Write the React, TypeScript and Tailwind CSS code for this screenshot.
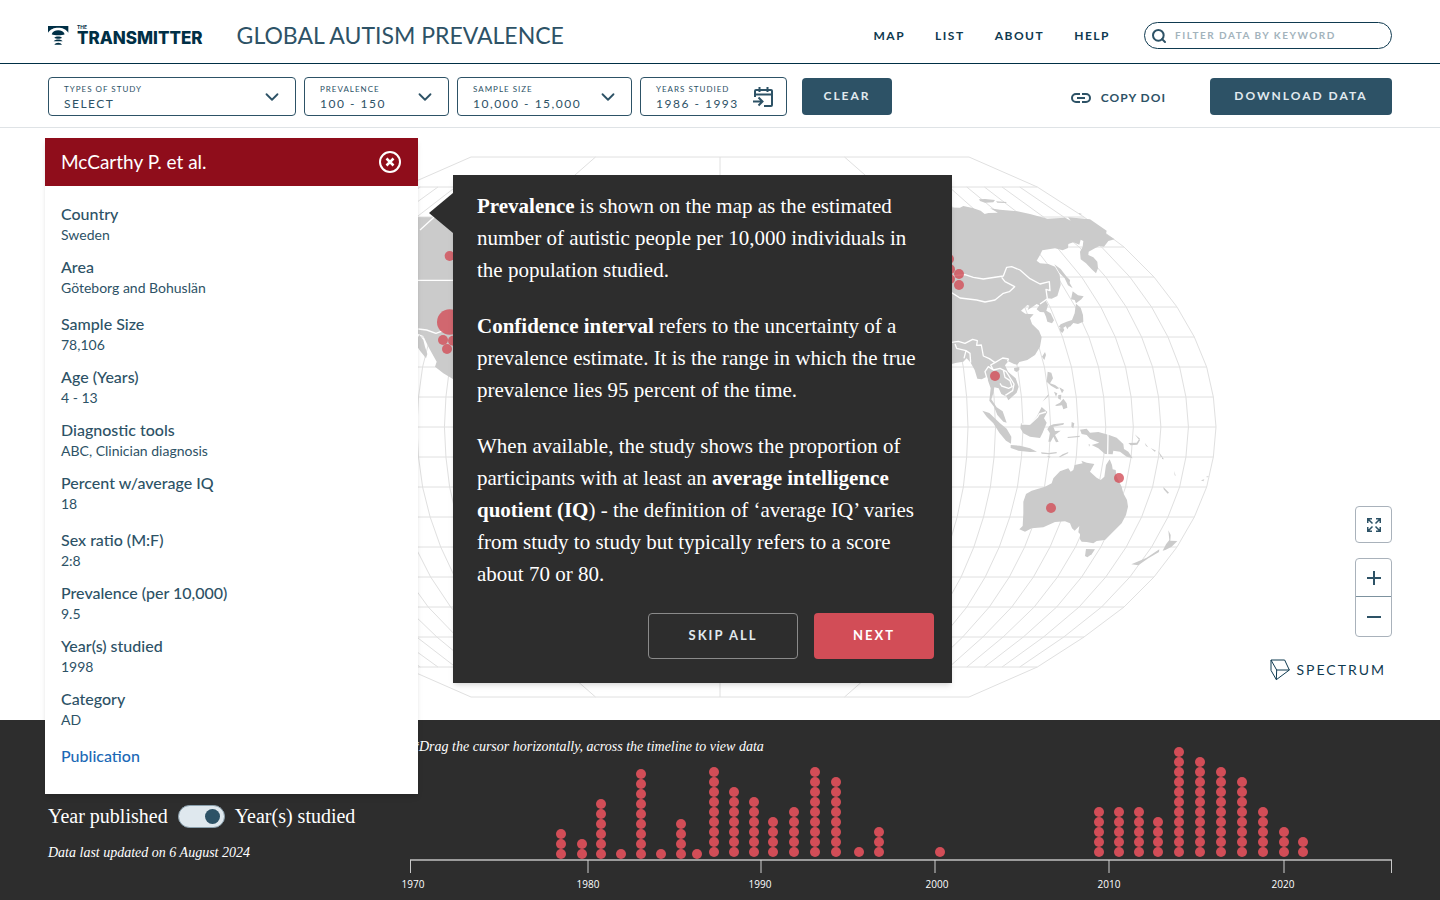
import { ChevronDown, Search } from "lucide-react";

const NAV = ["Map", "List", "About", "Help"];

const STUDY_GROUPS = [
  [
    { label: "Country", value: "Sweden" },
    { label: "Area", value: "Göteborg and Bohuslän" },
  ],
  [
    { label: "Sample Size", value: "78,106" },
    { label: "Age (Years)", value: "4 - 13" },
    { label: "Diagnostic tools", value: "ABC, Clinician diagnosis" },
    { label: "Percent w/average IQ", value: "18" },
  ],
  [
    { label: "Sex ratio (M:F)", value: "2:8" },
    { label: "Prevalence (per 10,000)", value: "9.5" },
    { label: "Year(s) studied", value: "1998" },
    { label: "Category", value: "AD" },
  ],
];

// x position, number of studies, y of the lowest dot
const COLUMNS = [
  [151, 3, 114], [172, 2, 114], [191, 6, 114], [211, 1, 114], [231, 9, 114], [251, 1, 114],
  [271, 4, 114], [287, 1, 114], [304, 9, 112], [324, 7, 112], [344, 6, 112], [363, 4, 112],
  [384, 5, 112], [405, 9, 112], [426, 8, 112], [449, 1, 112], [469, 3, 112], [530, 1, 112],
  [689, 5, 112], [709, 5, 112], [729, 5, 112], [748, 4, 112], [769, 11, 112], [790, 10, 112],
  [811, 9, 112], [832, 8, 112], [853, 5, 112], [874, 3, 112], [893, 2, 112],
];

const TICKS = [
  { x: 1, label: "1970", textX: 3 },
  { x: 178, label: "1980", textX: 178 },
  { x: 351, label: "1990", textX: 350 },
  { x: 525, label: "2000", textX: 527 },
  { x: 699, label: "2010", textX: 699 },
  { x: 874, label: "2020", textX: 873 },
];

// Half width of the globe outline for every 10 degrees of latitude
const HALF_WIDTHS = [1488, 1480, 1460, 1423, 1371, 1302, 1212, 1092, 952, 747];
const CX = -660;
const CY = 861;

function meridian(share: number, maxLat: number) {
  const points: string[] = [];
  for (let lat = -maxLat; lat <= maxLat; lat++) {
    points.push(`${CX + share * HALF_WIDTHS[Math.abs(lat)]},${CY + lat * 90}`);
  }
  return points.join(" ");
}

const MERIDIANS = Array.from({ length: 37 }, (_, i) => meridian((i - 18) / 18, (i - 18) % 9 === 0 ? 9 : 8));
const LATITUDES = Array.from({ length: 19 }, (_, i) => i - 9);

const LAND = [
  // Asia
  "M-40 200L60 203L70 198L98 204L122 212L134 222L145 219L175 218L150 205L180 209L232 214L270 222L322 236L375 233L392 242L384 232L450 238L500 272L498 281L524 298L505 303L492 320L478 318L462 326L446 335L445 345L460 352L472 365L474 385L468 400L455 388L438 370L422 358L420 335L428 320L430 303L422 299L418 314L400 307L385 312L384 324L368 331L345 325L307 331L300 345L290 362L300 370L325 372L345 380L359 404L362 435L352 468L335 476L322 475L318 484L324 495L319 512L332 520L342 541L336 550L322 545L318 530L312 517L300 516L290 508L298 496L290 492L276 502L263 510L268 497L262 495L243 512L256 521L281 523L270 535L276 552L297 572L305 592L300 620L285 645L262 660L238 666L232 674L222 672L205 664L195 676L204 695L227 715L236 740L230 758L205 781L200 770L184 762L176 745L163 742L160 760L154 778L170 802L188 814L200 848L190 845L172 825L162 800L148 782L152 745L140 710L125 718L112 716L104 690L92 668L80 655L70 665L50 668L-40 690Z",
  "M117 178L135 177L165 180L160 187L135 188L120 183ZM168 184L200 186L198 189L172 188ZM416 219L426 222L420 224Z",
  "M343 373L362 387L380 410L390 420L389 429L398 445L384 436L374 415L358 398Z",
  "M398 454L414 466L431 469L424 478L408 490L404 480L393 478Z",
  "M408 491L422 503L429 525L430 545L414 552L400 549L390 560L378 558L366 566L356 560L362 553L380 545L396 540L404 520L406 505Z",
  "M358 565L370 564L373 570L367 579L361 574ZM377 557L388 558L382 568Z",
  "M315 636L318 645L313 660L306 650ZM222 684L238 681L238 690L230 696L223 692Z",
  "M323 695L334 698L339 715L330 730L345 735L358 745L350 747L333 737L320 725ZM342 755L352 760L348 770ZM358 742L372 750L366 760ZM355 765L364 764L362 780L354 775ZM345 796L360 788L370 776L380 790L382 803L370 808L366 796L350 798ZM325 763L326 768L307 785Z",
  // Sumatra, Java and Borneo
  "M127 812L148 819L180 850L200 866L214 890L213 911L198 902L178 878L160 850L140 830Z",
  "M212 915L240 917L270 925L291 935L270 936L235 932L212 924Z",
  "M243 850L268 854L290 830L305 801L322 816L312 835L320 848L308 878L300 894L270 890L250 880L241 865Z",
  "M328 858L340 853L372 849L370 854L340 860L345 873L362 872L345 885L356 905L348 907L340 890L332 905L325 905L330 880L322 868ZM395 846L403 850L400 865L394 860Z",
  "M303 937L325 939L350 936L350 940L328 943L305 941ZM357 950L368 943L385 936L384 940L360 952ZM320 947L332 950L328 953ZM382 891L420 887L418 891L384 894ZM446 912L450 914L447 920Z",
  // New Guinea and the islands east of it
  "M420 869L440 866L450 878L475 876L505 884L530 893L550 912L552 927L565 935L578 955L560 950L540 935L520 932L518 943L495 942L475 925L455 915L478 908L450 896L440 885L425 882Z",
  "M565 909L590 908L598 896L600 901L592 914L572 916ZM584 883L600 896L597 899ZM614 908L625 922L618 918ZM632 924L648 932L644 935ZM654 932L668 952L662 950ZM666 950L672 958L666 957Z",
  "M670 1041L687 1058L683 1061L671 1048ZM703 993L707 1008L704 1006ZM783 1021L793 1018L790 1024ZM797 1011L806 1008L804 1012Z",
  // Australia
  "M509 958L516 975L518 988L527 990L530 1010L545 1040L550 1060L561 1080L564 1100L558 1125L545 1150L515 1180L495 1200L470 1203L460 1210L440 1206L425 1205L420 1198L420 1182L415 1177L418 1158L404 1172L396 1165L390 1150L375 1144L345 1146L310 1162L275 1165L255 1175L238 1168L248 1158L250 1120L250 1085L258 1062L275 1052L315 1040L335 1030L340 1015L360 994L385 985L392 995L400 990L404 975L428 970L424 962L440 968L463 972L450 995L470 1013L482 1020L493 1010L498 975Z",
  "M438 1227L465 1228L455 1243L442 1252L435 1248Z",
  "M685 1171L692 1185L691 1202L712 1203L695 1220L676 1230L668 1232L678 1213L688 1200ZM658 1228L657 1236L625 1255L595 1276L574 1273L590 1266L620 1253Z",
  // North America
  "M-1700 230L-1520 232L-1440 232L-1440 730L-1490 700L-1515 680L-1510 665L-1535 620L-1550 588L-1570 580L-1700 560Z",
  "M-1562 585L-1550 600L-1545 620L-1538 642L-1542 655L-1560 632L-1575 610Z",
];

const BORDERS = [
  "M30 408L75 404L100 412L130 417L190 408L200 382L215 380L240 390L270 416L300 432L328 425L330 452L318 448L322 476M30 455L60 474L110 480L135 486L165 480L190 460L208 455L224 440L195 425L185 412M323 476L300 492",
  "M30 608L55 604L75 610L98 598L112 602L110 616L124 615L130 648L148 656L165 668L188 654L206 657M165 668L152 675L160 690L145 680L135 695L142 720M160 690L180 685L190 690L195 712L210 722L216 740L206 745L185 738L180 730M180 685L198 694L222 732L218 752L196 766M45 612L50 625L78 632L72 655M78 632L90 640L92 668M206 657L202 664",
  "M245 852L270 852L292 832L298 822L318 816M504 882L503 944",
  "M-1600 421H-1400M-1560 270L-1500 215M-1565 567L-1540 570L-1512 580L-1490 572",
];

// Study sites on the map: x, y, radius
const SITES = [
  [-1471, 348, 15], [-1471, 546, 38], [-1491, 600, 15], [-1461, 602, 15], [-1479, 627, 15],
  [27, 357, 15], [30, 388, 15], [30, 417, 15], [57, 402, 15], [57, 435, 15],
  [165, 708, 15], [537, 1014, 15], [333, 1104, 15],
];

function Logo() {
  return (
    <a href="#" aria-label="The Transmitter" className="flex items-center gap-2 text-[#002f45]">
      <svg width="21" height="19" viewBox="0 0 63 57" fill="currentColor" aria-hidden="true">
        <path d="M0 0H61V20C54 9 43 5 30.500 5S7 9 0 20Z" />
        <path d="M11 25C15 9 46 9 50 25C43 29 18 29 11 25Z" />
        <path d="M19 35C23 30 38 30 42 35C37 39 24 39 19 35Z" />
        <path d="M17 46C22 39 39 39 44 46Z" />
        <path d="M19 56C23 48 38 48 42 56Z" />
      </svg>
      <span className="flex flex-col font-['Inter',sans-serif]">
        <span className="text-[5px] leading-[5px] font-bold">THE</span>
        <span className="text-[17px] leading-[17px] font-extrabold">TRANSMITTER</span>
      </span>
    </a>
  );
}

function Header() {
  return (
    <header className="flex h-16 items-center border-b border-[#002f45] px-12 pt-2">
      <Logo />
      <h1 className="ml-[34px] flex-1 text-[23px] text-[#2d5266]">GLOBAL AUTISM PREVALENCE</h1>
      <nav className="mr-[34px] flex gap-[30px] text-xs font-bold tracking-[1.5px] text-[#0f3a50] uppercase">
        {NAV.map((item) => (
          <a key={item} href={`#${item.toLowerCase()}`}>
            {item}
          </a>
        ))}
      </nav>
      <label className="flex h-[27px] w-[248px] items-center gap-2 rounded-full border border-[#0f3a50] px-1.5">
        <Search className="size-4 shrink-0 text-[#2d5266]" strokeWidth={3} />
        <input
          type="search"
          aria-label="Filter data by keyword"
          placeholder="FILTER DATA BY KEYWORD"
          className="w-full min-w-0 bg-transparent text-[10px] font-bold tracking-[1.5px] outline-none placeholder:text-[#a3b3bc]"
        />
      </label>
    </header>
  );
}

function FilterSelect({ id, label, value, width }: { id: string; label: string; value: string; width: string }) {
  return (
    <div className={`relative h-[39px] rounded border border-[#2d5266] px-[15px] pt-[5px] text-[#2d5266] ${width}`}>
      <label htmlFor={id} className="mb-px block text-[8px] leading-3 tracking-[1px] uppercase">
        {label}
      </label>
      <select id={id} className="block w-full appearance-none bg-transparent text-xs leading-4 tracking-[1.5px] outline-none">
        <option>{value}</option>
      </select>
      <ChevronDown className="pointer-events-none absolute top-2 right-3 size-[22px]" />
    </div>
  );
}

function Toolbar() {
  return (
    <div className="flex h-16 items-center border-b border-[#dfe3e6] px-12 pt-px">
      <div className="flex gap-2">
        <FilterSelect id="study-type" label="Types of study" value="SELECT" width="w-[248px]" />
        <FilterSelect id="prevalence" label="Prevalence" value="100 - 150" width="w-[145px]" />
        <FilterSelect id="sample-size" label="Sample size" value="10,000 - 15,000" width="w-[175px]" />
        <div className="relative h-[39px] w-[147px] rounded border border-[#2d5266] px-[15px] pt-[5px] text-[#2d5266]">
          <label htmlFor="years" className="mb-px block text-[8px] leading-3 tracking-[1px] uppercase">
            Years studied
          </label>
          <input
            id="years"
            defaultValue="1986 - 1993"
            className="block w-[90px] bg-transparent text-xs leading-4 tracking-[1.5px] outline-none"
          />
          <svg
            className="pointer-events-none absolute top-2 right-3"
            width="22"
            height="22"
            viewBox="0 0 22 22"
            fill="none"
            stroke="currentColor"
            strokeWidth="2"
            aria-hidden="true"
          >
            <path d="M3 11V5a1 1 0 0 1 1-1h15a1 1 0 0 1 1 1v14a1 1 0 0 1-1 1h-7M3 8.500h17M7.500 1v5M15.500 1v5M1 15.500h9M6.500 11.500l4 4l-4 4" />
          </svg>
        </div>
      </div>
      <button className="ml-[15px] h-[37px] w-[90px] rounded bg-[#2d5266] text-xs font-bold tracking-[2px] text-[#e1eaef]">
        CLEAR
      </button>
      <button className="mt-1 ml-auto flex items-center gap-2.5 text-xs font-bold tracking-[1px] text-[#2d5266]">
        <svg width="20" height="10" viewBox="0 0 20 10" fill="none" stroke="currentColor" strokeWidth="2" aria-hidden="true">
          <path d="M9 1H5a4 4 0 0 0 0 8h4M11 1h4a4 4 0 0 1 0 8h-4M6 5h8" />
        </svg>
        COPY DOI
      </button>
      <button className="ml-11 h-[37px] w-[182px] rounded bg-[#2d5266] text-xs font-bold tracking-[2px] text-[#e1eaef]">
        DOWNLOAD DATA
      </button>
    </div>
  );
}

function WorldMap() {
  return (
    <svg className="mx-auto w-[1000px] max-w-full" viewBox="-2160 45 3000 1635" role="img" aria-label="World map of studies">
      <g fill="none" stroke="#e0e0e0" strokeWidth="3">
        {MERIDIANS.map((points) => (
          <polyline key={points} points={points} />
        ))}
        {LATITUDES.map((lat) => {
          const half = HALF_WIDTHS[Math.abs(lat)];
          return <path key={lat} d={`M${CX - half} ${CY + lat * 90}h${half * 2}`} />;
        })}
      </g>
      <g fill="#cbcbcb">
        {LAND.map((d) => (
          <path key={d} d={d} />
        ))}
      </g>
      <g fill="none" stroke="#fff" strokeWidth="4" strokeLinejoin="round">
        {BORDERS.map((d) => (
          <path key={d} d={d} />
        ))}
      </g>
      <g fill="#d24d57" fillOpacity="0.8">
        {SITES.map(([x, y, r]) => (
          <circle key={`${x} ${y}`} cx={x} cy={y} r={r} />
        ))}
      </g>
    </svg>
  );
}

function MapControls() {
  return (
    <div className="absolute right-12 bottom-[39px] flex flex-col items-end text-[#2d5266]">
      <button
        aria-label="Full screen"
        className="flex size-[37px] items-center justify-center rounded border border-[#a9b2bb] bg-white"
      >
        <svg width="14" height="14" viewBox="0 0 14 14" fill="none" stroke="currentColor" strokeWidth="1.500" aria-hidden="true">
          <path d="M.75 5V.75H5M9 .75h4.250V5M13.250 9v4.250H9M5 13.250H.75V9M1 1l4.500 4.500M13 1L8.500 5.500M13 13L8.500 8.500M1 13l4.500-4.500" />
        </svg>
      </button>
      <div className="mt-[15px] flex w-[37px] flex-col divide-y divide-[#7d929f] rounded border border-[#a9b2bb] bg-white">
        <button aria-label="Zoom in" className="flex h-[38px] items-center justify-center">
          <svg width="14" height="14" viewBox="0 0 14 14" stroke="currentColor" strokeWidth="2" aria-hidden="true">
            <path d="M0 7h14M7 0v14" />
          </svg>
        </button>
        <button aria-label="Zoom out" className="flex h-[39px] items-center justify-center">
          <svg width="14" height="14" viewBox="0 0 14 14" stroke="currentColor" strokeWidth="2" aria-hidden="true">
            <path d="M0 7h14" />
          </svg>
        </button>
      </div>
      <a href="#" className="mt-[22px] mr-1.5 flex items-center gap-[7px] text-sm tracking-[2px] text-[#0f3a50]">
        <svg width="20" height="22" viewBox="0 0 60 66" fill="none" stroke="currentColor" strokeWidth="3" strokeLinejoin="round" aria-hidden="true">
          <path d="M3 3H44L58 33L19 62L3 34ZM3 3L20 33H58M20 33L19 62" />
        </svg>
        SPECTRUM
      </a>
    </div>
  );
}

function StudyPanel() {
  return (
    <section className="absolute top-[138px] left-[45px] z-10 w-[373px] bg-white text-[#2d5266] shadow-md">
      <header className="flex h-12 items-center justify-between bg-[#8f0d1b] px-4 text-white">
        <h2 className="text-[19px]">McCarthy P. et al.</h2>
        <button aria-label="Close">
          <svg width="24" height="24" viewBox="0 0 24 24" fill="none" stroke="currentColor" strokeWidth="2" aria-hidden="true">
            <circle cx="12" cy="12" r="10" />
            <path d="M8.500 8.500l7 7M15.500 8.500l-7 7" strokeWidth="2.500" />
          </svg>
        </button>
      </header>
      <div className="flex flex-col gap-[15px] px-4 pt-[17px] pb-[27px]">
        {STUDY_GROUPS.map((group) => (
          <dl key={group[0].label} className="flex flex-col gap-[11px]">
            {group.map(({ label, value }) => (
              <div key={label}>
                <dt className="text-base leading-[22px] font-medium">{label}</dt>
                <dd className="text-sm leading-5">{value}</dd>
              </div>
            ))}
          </dl>
        ))}
        <a href="#" className="text-base leading-[22px] font-medium text-[#1b69b6]">
          Publication
        </a>
      </div>
    </section>
  );
}

function TourDialog() {
  return (
    <div
      role="dialog"
      aria-label="Prevalence help"
      className="absolute top-[175px] left-[453px] z-20 w-[499px] bg-[#2d2d2d] pt-[15px] pr-[18px] pb-6 pl-6 text-white shadow-md"
    >
      <svg className="absolute top-[18px] right-full" width="24" height="40" viewBox="0 0 24 40" fill="#2d2d2d" aria-hidden="true">
        <path d="M24 0V40L0 20Z" />
      </svg>
      <div className="flex flex-col gap-6 font-['Liberation_Serif',serif] text-[21px] leading-8">
        <p>
          <b>Prevalence</b> is shown on the map as the estimated
          <br />
          number of autistic people per 10,000 individuals in
          <br />
          the population studied.
        </p>
        <p>
          <b>Confidence interval</b> refers to the uncertainty of a
          <br />
          prevalence estimate. It is the range in which the true
          <br />
          prevalence lies 95 percent of the time.
        </p>
        <p>
          When available, the study shows the proportion of
          <br />
          participants with at least an <b>average intelligence</b>
          <br />
          <b>quotient (IQ</b>) - the definition of ‘average IQ’ varies
          <br />
          from study to study but typically refers to a score
          <br />
          about 70 or 80.
        </p>
      </div>
      <div className="mt-[23px] flex justify-end gap-4 text-[13px] font-bold tracking-[2px]">
        <button className="h-[46px] w-[150px] rounded-sm border border-[#8a8a8a] text-[#e1eaef]">SKIP ALL</button>
        <button className="h-[46px] w-[120px] rounded-sm bg-[#d24d57]">NEXT</button>
      </div>
    </div>
  );
}

function Timeline() {
  return (
    <svg className="w-full overflow-visible" viewBox="0 0 982 155" role="img" aria-label="Studies per year">
      <g fill="#d24d57">
        {COLUMNS.map(([x, count, base]) =>
          Array.from({ length: count }, (_, i) => <circle key={`${x} ${i}`} cx={x} cy={base - i * 10} r="5" />),
        )}
      </g>
      <path d="M0 120H982" stroke="#9b9b9b" strokeWidth="2" />
      <path d="M.5 120v13M981.500 120v13" stroke="#c8c8c8" />
      {TICKS.map(({ x, label, textX }) => (
        <g key={label}>
          {x > 1 && <path d={`M${x} 120v13`} stroke="#d0d0d0" />}
          <text x={textX} y="148" textAnchor="middle" fontSize="10" fill="#fff">
            {label}
          </text>
        </g>
      ))}
    </svg>
  );
}

function Footer() {
  return (
    <footer className="flex bg-[#2d2d2d] px-12 pb-[5px] font-['Liberation_Serif',serif] text-white">
      <div className="w-[362px] shrink-0 pt-[81px]">
        <label className="flex items-center gap-2.5 text-xl leading-[30px]">
          Year published
          <input type="checkbox" role="switch" defaultChecked className="peer sr-only" />
          <span className="flex h-[23px] w-[47px] items-center justify-end rounded-full border border-[#8aa0ad] bg-[#dfe8ee] px-1">
            <span className="size-[15px] rounded-full bg-[#2d5266]" />
          </span>
          Year(s) studied
        </label>
        <p className="mt-3 text-sm leading-5 italic">Data last updated on 6 August 2024</p>
      </div>
      <div className="flex-1">
        <p className="-mb-[17px] pt-[17px] pl-0.5 text-sm leading-5 italic">
          *Drag the cursor horizontally, across the timeline to view data
        </p>
        <div className="font-['Open_Sans',sans-serif]">
          <Timeline />
        </div>
      </div>
    </footer>
  );
}

export default function App() {
  return (
    <div className="relative flex min-h-screen flex-col bg-white font-['Lato',sans-serif]">
      <Header />
      <Toolbar />
      <main className="relative flex-1 pt-[27px]">
        <WorldMap />
        <MapControls />
      </main>
      <Footer />
      <StudyPanel />
      <TourDialog />
    </div>
  );
}
